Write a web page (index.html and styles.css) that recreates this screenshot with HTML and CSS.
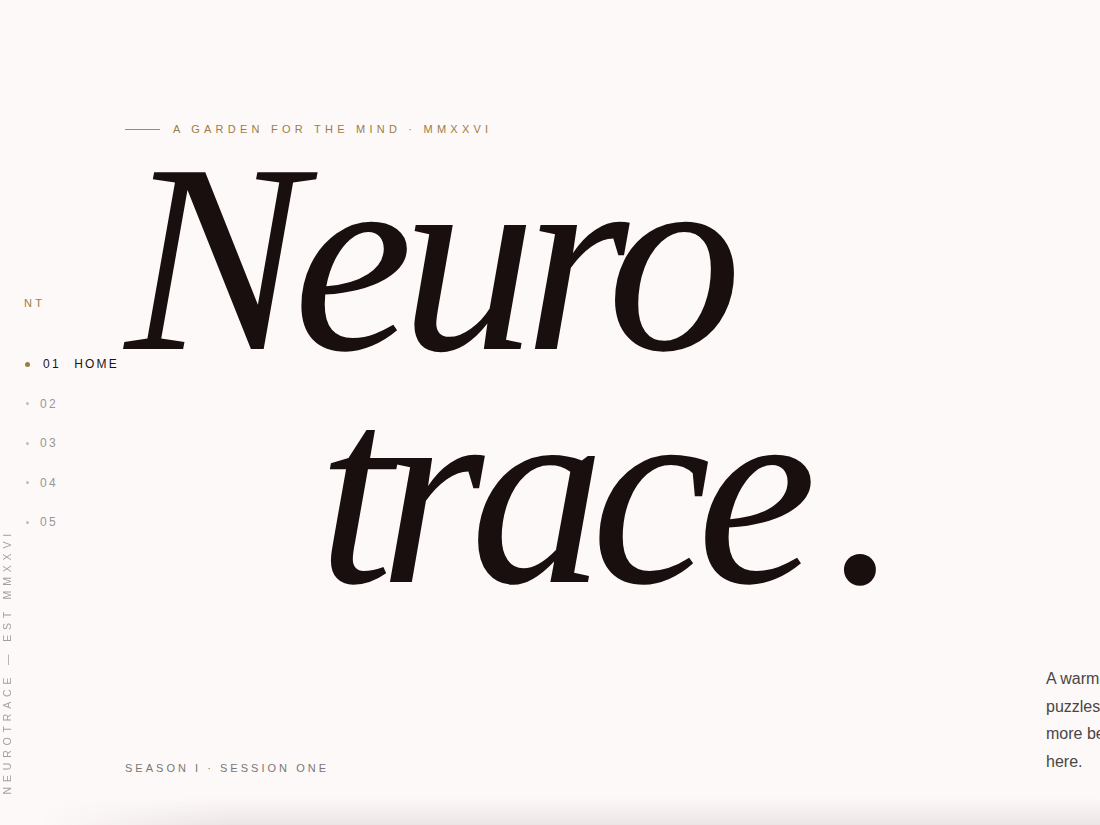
FILE: index.html
```html
<!DOCTYPE html>
<html lang="en">
<head>
<meta charset="utf-8">
<title>Neurotrace</title>
<link rel="stylesheet" href="styles.css">
</head>
<body>
<div class="page">
  <aside class="rail">
    <div class="rail-label">NT</div>
    <nav class="nav">
      <a class="nav-item is-active"><span class="dot"></span><span class="num">01</span><span class="name">HOME</span></a>
      <a class="nav-item"><span class="dot"></span><span class="num">02</span></a>
      <a class="nav-item"><span class="dot"></span><span class="num">03</span></a>
      <a class="nav-item"><span class="dot"></span><span class="num">04</span></a>
      <a class="nav-item"><span class="dot"></span><span class="num">05</span></a>
    </nav>
    <div class="vertical">NEUROTRACE — EST MMXXVI</div>
  </aside>
  <main class="main">
    <div class="eyebrow"><span class="rule"></span><span>A GARDEN FOR THE MIND · MMXXVI</span></div>
    <h1 class="title"><span class="line1">Neuro</span><span class="line2">trace<span class="stop">.</span></span></h1>
    <div class="foot">
      <div class="season">SEASON I · SESSION ONE</div>
      <p class="intro">A warm welcome to gentle<br>puzzles that tend the mind,<br>more beauty begins right<br>here.</p>
    </div>
  </main>
</div>
</body>
</html>
```
FILE: styles.css
```css
html, body {
  margin: 0;
  padding: 0;
}
body {
  background: #fdf9f8;
  overflow: hidden;
  font-family: "Liberation Sans", Arial, sans-serif;
}
.page {
  position: relative;
  display: flex;
  width: 1100px;
  height: 825px;
  overflow: hidden;
}
.page::after {
  content: "";
  position: absolute;
  left: 0;
  right: 0;
  bottom: 0;
  height: 28px;
  background: linear-gradient(to bottom, rgba(60, 40, 40, 0), rgba(60, 40, 40, 0.09));
  -webkit-mask-image: linear-gradient(to right, transparent 40px, #000 230px);
  mask-image: linear-gradient(to right, transparent 40px, #000 230px);
  pointer-events: none;
}

/* left rail */
.rail {
  flex: none;
  width: 125px;
  display: flex;
  flex-direction: column;
  position: relative;
  z-index: 1;
}
.rail-label {
  margin: 297px 0 0 24px;
  font-size: 11px;
  line-height: 12px;
  letter-spacing: 0.3em;
  color: #9c7d45;
}
.nav {
  display: flex;
  flex-direction: column;
  gap: 25.5px;
  margin: 48px 0 0 25px;
}
.nav-item {
  display: flex;
  align-items: center;
  height: 14px;
  font-size: 12px;
  line-height: 14px;
  letter-spacing: 0.2em;
  color: #9a9696;
}
.dot {
  width: 3px;
  height: 3px;
  border-radius: 50%;
  background: #c4bcbc;
  margin: 0 11px 0 1px;
}
.is-active .dot {
  width: 5px;
  height: 5px;
  background: #9c7d45;
  margin: 0 13px 0 0;
}
.is-active .num {
  color: #1b1414;
}
.name {
  margin-left: 13px;
  letter-spacing: 0.18em;
  color: #1b1414;
}
.vertical {
  margin: auto 0 32px 2px;
  writing-mode: vertical-rl;
  transform: rotate(180deg);
  font-size: 10.5px;
  line-height: 11px;
  letter-spacing: 0.46em;
  color: #a3a0a0;
  white-space: nowrap;
}

/* main */
.main {
  flex: 1;
  min-width: 0;
  display: flex;
  flex-direction: column;
}
.eyebrow {
  display: flex;
  align-items: center;
  gap: 13px;
  margin-top: 122px;
  height: 14px;
  font-size: 11px;
  line-height: 14px;
  letter-spacing: 0.385em;
  color: #9c7d45;
  white-space: nowrap;
}
.rule {
  width: 35px;
  height: 1px;
  background: #a88a55;
}
.title {
  margin: 5px 0 0 0;
  font-family: "Liberation Serif", "Times New Roman", serif;
  font-style: italic;
  font-weight: normal;
  font-size: 270px;
  line-height: 233px;
  letter-spacing: -12px;
  color: #1a0f0f;
  display: flex;
  flex-direction: column;
}
.line2 {
  padding-left: 193px;
  letter-spacing: -14px;
}
.stop {
  margin-left: 30px;
}
.foot {
  margin-top: auto;
  padding-bottom: 50px;
  display: grid;
  grid-template-columns: 921px 320px;
  align-items: end;
}
.season {
  font-size: 11px;
  line-height: 14px;
  letter-spacing: 0.275em;
  color: #7a7676;
  white-space: nowrap;
}
.intro {
  margin: 0;
  font-size: 16px;
  line-height: 27.5px;
  color: #4a4646;
  white-space: nowrap;
}
```
